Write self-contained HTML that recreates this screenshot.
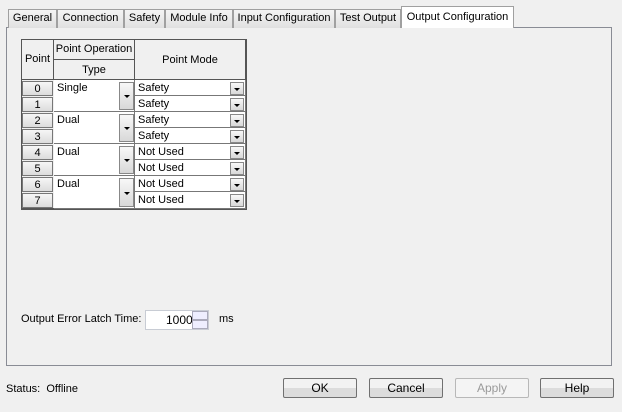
<!DOCTYPE html><html><head><style>
*{box-sizing:border-box;margin:0;padding:0}
body{width:622px;height:412px;background:#f0f0f0;font-family:"Liberation Sans",sans-serif;font-size:11px;color:#000;position:relative;overflow:hidden}
.a{position:absolute}
.tab{position:absolute;top:9px;height:19px;border:1px solid #a0a0a0;border-bottom:none;background:linear-gradient(#f4f4f4,#e0e0e0);text-align:center;line-height:17px}
.sel{top:6px;height:22px;background:#fff;z-index:2;line-height:20px}
.panel{position:absolute;left:6px;top:27px;width:606px;height:339px;border:1px solid #898c95;background:#f0f0f0}
.hd{position:absolute;background:#f0f0f0;border-right:1px solid #555;border-bottom:1px solid #555;text-align:center}
.pb{position:absolute;left:22px;width:31px;height:15px;border:1px solid #777;background:linear-gradient(#f6f6f6,#dcdcdc);text-align:center;line-height:15px}
.wc{position:absolute;background:#fff;border-right:1px solid #777;border-bottom:1px solid #777;padding-left:3px;line-height:16px}
.db{position:absolute;border:1px solid #888;background:linear-gradient(#f8f8f8,#d8d8d8)}
.db:after{content:"";position:absolute;left:50%;top:50%;margin:-1px 0 0 -3px;border-left:3px solid transparent;border-right:3px solid transparent;border-top:3px solid #000}
.btn{position:absolute;top:378px;width:74px;height:20px;border:1px solid #707070;border-radius:2px;background:linear-gradient(#f2f2f2 50%,#dcdcdc 50%);text-align:center;line-height:18px;font-size:12px}
</style></head><body>
<div class="panel"></div>
<div class="tab" style="left:8px;width:49px">General</div>
<div class="tab" style="left:57px;width:67px">Connection</div>
<div class="tab" style="left:124px;width:41px">Safety</div>
<div class="tab" style="left:165px;width:68px">Module Info</div>
<div class="tab" style="left:233px;width:102px">Input Configuration</div>
<div class="tab" style="left:335px;width:66px">Test Output</div>
<div class="tab sel" style="left:401px;width:113px">Output Configuration</div>

<div class="a" style="left:21px;top:39px;width:226px;height:171px;border:1px solid #555;border-right:2px solid #555;border-bottom:2px solid #555;background:#f0f0f0"></div>
<div class="hd" style="left:22px;top:40px;width:32px;height:40px;line-height:38px">Point</div>
<div class="hd" style="left:54px;top:40px;width:81px;height:20px;line-height:18px">Point Operation</div>
<div class="hd" style="left:54px;top:60px;width:81px;height:20px;line-height:20px">Type</div>
<div class="hd" style="left:135px;top:40px;width:111px;height:40px;line-height:40px">Point Mode</div>

<div class="pb" style="top:81px">0</div><div class="pb" style="top:97px">1</div>
<div class="pb" style="top:113px">2</div><div class="pb" style="top:129px">3</div>
<div class="pb" style="top:145px">4</div><div class="pb" style="top:161px">5</div>
<div class="pb" style="top:177px">6</div><div class="pb" style="top:193px">7</div>

<div class="wc" style="left:54px;top:80px;width:81px;height:32px">Single</div><div class="db" style="left:119px;top:82px;width:15px;height:28px"></div>
<div class="wc" style="left:54px;top:112px;width:81px;height:32px">Dual</div><div class="db" style="left:119px;top:114px;width:15px;height:28px"></div>
<div class="wc" style="left:54px;top:144px;width:81px;height:32px">Dual</div><div class="db" style="left:119px;top:146px;width:15px;height:28px"></div>
<div class="wc" style="left:54px;top:176px;width:81px;height:33px">Dual</div><div class="db" style="left:119px;top:178px;width:15px;height:29px"></div>

<div class="wc" style="left:135px;top:80px;width:111px;height:16px">Safety</div><div class="db" style="left:230px;top:82px;width:14px;height:13px"></div>
<div class="wc" style="left:135px;top:96px;width:111px;height:16px">Safety</div><div class="db" style="left:230px;top:98px;width:14px;height:13px"></div>
<div class="wc" style="left:135px;top:112px;width:111px;height:16px">Safety</div><div class="db" style="left:230px;top:114px;width:14px;height:13px"></div>
<div class="wc" style="left:135px;top:128px;width:111px;height:16px">Safety</div><div class="db" style="left:230px;top:130px;width:14px;height:13px"></div>
<div class="wc" style="left:135px;top:144px;width:111px;height:16px">Not Used</div><div class="db" style="left:230px;top:146px;width:14px;height:13px"></div>
<div class="wc" style="left:135px;top:160px;width:111px;height:16px">Not Used</div><div class="db" style="left:230px;top:162px;width:14px;height:13px"></div>
<div class="wc" style="left:135px;top:176px;width:111px;height:16px">Not Used</div><div class="db" style="left:230px;top:178px;width:14px;height:13px"></div>
<div class="wc" style="left:135px;top:192px;width:111px;height:17px">Not Used</div><div class="db" style="left:230px;top:194px;width:14px;height:13px"></div>

<div class="a" style="left:21px;top:313px">Output Error Latch Time:</div>
<div class="a" style="left:145px;top:310px;width:64px;height:20px;border:1px solid #c8ccd4;background:#fff;font-size:12px;line-height:18px;padding-left:20px">1000</div>
<div class="a" style="left:192px;top:311px;width:16px;height:9px;border:1px solid #aab;background:#eef"></div>
<div class="a" style="left:192px;top:320px;width:16px;height:9px;border:1px solid #aab;background:#eef"></div>
<div class="a" style="left:219px;top:313px">ms</div>

<div class="a" style="left:6px;top:383px;font-size:11px">Status:&nbsp; Offline</div>
<div class="btn" style="left:283px">OK</div>
<div class="btn" style="left:369px">Cancel</div>
<div class="btn" style="left:455px;color:#9a9a9a;border-color:#b8b8b8;background:#f4f4f4">Apply</div>
<div class="btn" style="left:540px">Help</div>
</body></html>
